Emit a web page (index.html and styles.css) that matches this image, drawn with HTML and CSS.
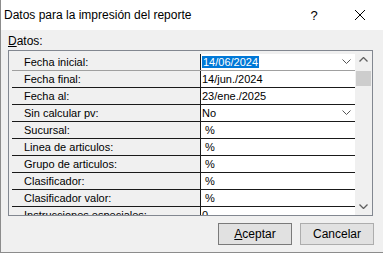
FILE: index.html
```html
<!DOCTYPE html>
<html lang="es">
<head>
	<meta charset="UTF-8">
	<title>Datos para la impresión del reporte</title>
	<link rel="stylesheet" href="styles.css">
</head>
<body>
    <div class="window">
        <div class="titlebar">
            <span class="title">Datos para la impresión del reporte</span>
            <span class="help">?</span>
            <span class="close">
                <svg width="12" height="12" viewBox="0 0 12 12"><path d="M1 1 L11 11 M11 1 L1 11" stroke="#000" stroke-width="1" fill="none"/></svg>
            </span>
        </div>
        <div class="content">
            <div class="caption"><u>D</u>atos:</div>
            <div class="grid">
                <div class="rows">
                    <div class="row">
                        <div class="label">Fecha inicial:</div>
                        <div class="value combo first"><span class="sel">14/06/2024</span><span class="arrow"><svg width="9" height="5" viewBox="0 0 9 5"><path d="M0.5 0.5 L4.5 4.5 L8.5 0.5" stroke="#555" fill="none"/></svg></span></div>
                    </div>
                    <div class="row">
                        <div class="label">Fecha final:</div>
                        <div class="value">14/jun./2024</div>
                    </div>
                    <div class="row">
                        <div class="label">Fecha al:</div>
                        <div class="value">23/ene./2025</div>
                    </div>
                    <div class="row">
                        <div class="label">Sin calcular pv:</div>
                        <div class="value combo">No<span class="arrow"><svg width="9" height="5" viewBox="0 0 9 5"><path d="M0.5 0.5 L4.5 4.5 L8.5 0.5" stroke="#555" fill="none"/></svg></span></div>
                    </div>
                    <div class="row">
                        <div class="label">Sucursal:</div>
                        <div class="value pct">%</div>
                    </div>
                    <div class="row">
                        <div class="label">Linea de articulos:</div>
                        <div class="value pct">%</div>
                    </div>
                    <div class="row">
                        <div class="label">Grupo de articulos:</div>
                        <div class="value pct">%</div>
                    </div>
                    <div class="row">
                        <div class="label">Clasificador:</div>
                        <div class="value pct">%</div>
                    </div>
                    <div class="row">
                        <div class="label">Clasificador valor:</div>
                        <div class="value pct">%</div>
                    </div>
                    <div class="row">
                        <div class="label">Instrucciones especiales:</div>
                        <div class="value">0</div>
                    </div>
                </div>
                <div class="scrollbar">
                    <div class="sb-btn"><svg width="9" height="5" viewBox="0 0 9 5"><path d="M0.5 4.5 L4.5 0.5 L8.5 4.5" stroke="#606060" stroke-width="1.3" fill="none"/></svg></div>
                    <div class="sb-track"><div class="sb-thumb"></div></div>
                    <div class="sb-btn"><svg width="9" height="5" viewBox="0 0 9 5"><path d="M0.5 0.5 L4.5 4.5 L8.5 0.5" stroke="#606060" stroke-width="1.3" fill="none"/></svg></div>
                </div>
            </div>
            <div class="buttons">
                <a class="btn default" href="javascript:;"><u>A</u>ceptar</a>
                <a class="btn" href="javascript:;">Cancelar</a>
            </div>
        </div>
    </div>
</body>
</html>
```

FILE: styles.css
```css
        body {
        	margin: 0;
        	background: #fff;
        	font-family: "Liberation Sans", Arial, sans-serif;
        	color: #000;
        }
        .window {
        	width: 383px;
        	height: 253px;
        	box-sizing: border-box;
        	border-left: 1px solid #8c8c8c;
        	border-bottom: 1px solid #8c8c8c;
        	background: #f0f0f0;
        	display: flex;
        	flex-direction: column;
        }
        .titlebar {
        	height: 30px;
        	background: #fff;
        	display: flex;
        	align-items: center;
        	font-size: 12px;
        	padding-left: 3px;
        }
        .title {
        	flex: 1;
        }
        .help {
        	width: 46px;
        	text-align: center;
        	font-size: 13px;
        }
        .close {
        	width: 46px;
        	display: flex;
        	justify-content: center;
        }
        .content {
        	flex: 1;
        	padding: 0 9px 0 7px;
        	display: flex;
        	flex-direction: column;
        }
        .caption {
        	font-size: 12px;
        	height: 18px;
        	line-height: 18px;
        	margin-top: 2px;
        }
        .grid {
        	height: 166px;
        	box-sizing: border-box;
        	border: 1px solid #828790;
        	background: #f0f0f0;
        	display: flex;
        	overflow: hidden;
        	margin-right: 1px;
        }
        .rows {
        	flex: 1;
        	margin-left: 3px;
        	padding-top: 3px;
        	overflow: hidden;
        }
        .row {
        	display: flex;
        	height: 16px;
        	border-bottom: 1px solid #1a1a1a;
        	font-size: 11px;
        	line-height: 16px;
        }
        .row:first-child {
        	border-bottom-color: #a0a0a0;
        }
        .label {
        	width: 189px;
        	padding-left: 12px;
        	box-sizing: border-box;
        	border-right: 1px solid #1a1a1a;
        	background: #f0f0f0;
        	white-space: nowrap;
        }
        .value {
        	flex: 1;
        	background: #fff;
        	padding-left: 1px;
        	position: relative;
        	white-space: nowrap;
        }
        .value.pct {
        	padding-left: 4px;
        }
        .sel {
        	background: #0078d7;
        	color: #fff;
        	padding: 0 1px;
        }
        .combo .arrow {
        	position: absolute;
        	right: 4px;
        	top: 5px;
        	line-height: 0;
        }
        .scrollbar {
        	width: 17px;
        	background: #f0f0f0;
        	display: flex;
        	flex-direction: column;
        }
        .sb-btn {
        	height: 17px;
        	display: flex;
        	align-items: center;
        	justify-content: center;
        }
        .sb-track {
        	flex: 1;
        	padding: 3px 1px 0;
        }
        .sb-thumb {
        	height: 15px;
        	background: #cdcdcd;
        }
        .buttons {
        	display: flex;
        	justify-content: flex-end;
        	gap: 8px;
        	margin-top: 7px;
        }
        .btn {
        	width: 74px;
        	height: 22px;
        	box-sizing: border-box;
        	border: 1px solid #adadad;
        	background: #e1e1e1;
        	font-size: 12px;
        	line-height: 20px;
        	text-align: center;
        	text-decoration: none;
        	color: #000;
        }
        .btn.default {
        	border-color: #7a7a7a;
        }
```
